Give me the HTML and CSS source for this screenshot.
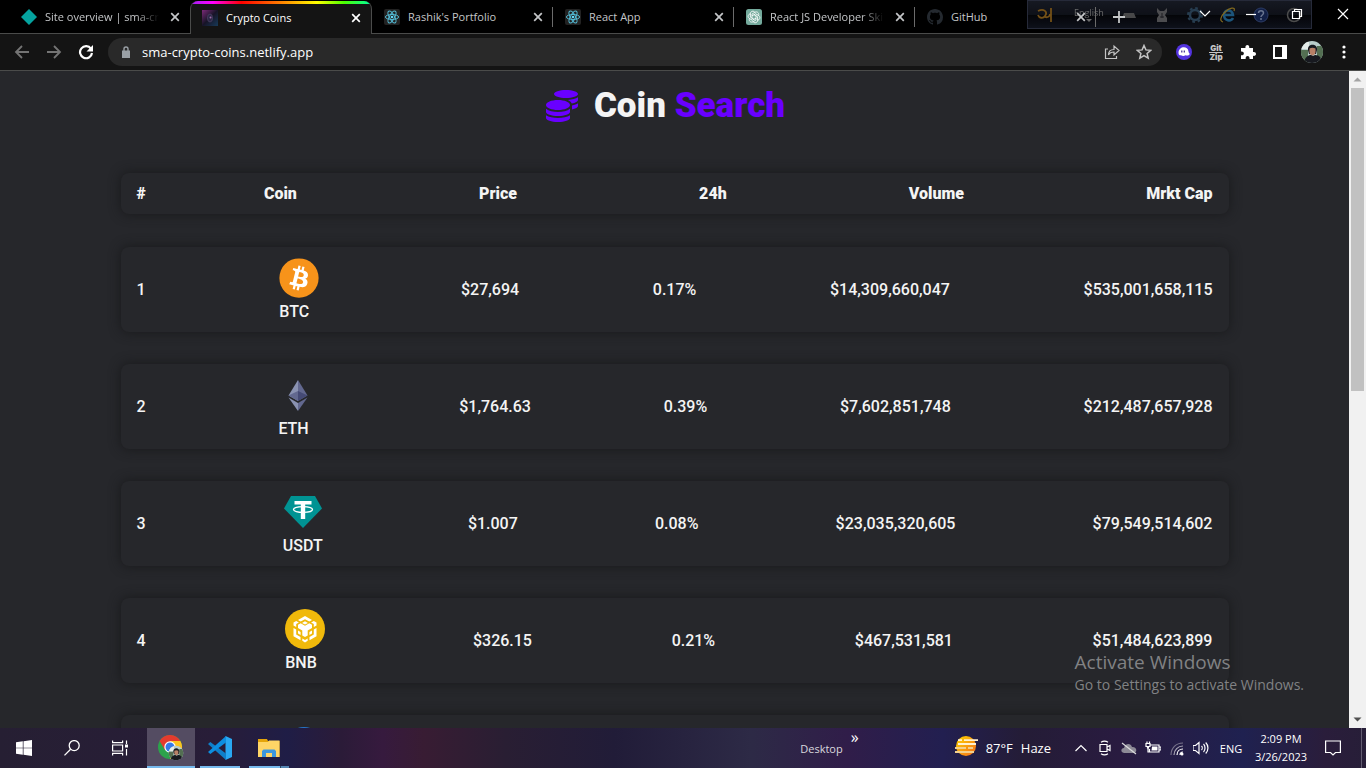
FILE: index.html
```html
<!DOCTYPE html>
<html lang="en">
<head>
<meta charset="utf-8">
<title>Crypto Coins</title>
<link rel="stylesheet" href="styles.css">
</head>
<body>
<svg class="defs" aria-hidden="true">
  <symbol id="x" viewBox="0 0 16 16"><path d="M4.2 4.2l7.6 7.6M11.8 4.2l-7.6 7.6" stroke="currentColor" stroke-width="1.7"/></symbol>
  <symbol id="react" viewBox="0 0 16 16"><rect width="16" height="16" rx="2" fill="#222"/><g fill="none" stroke="#53b9d3" stroke-width="1"><ellipse cx="8" cy="8" rx="6.6" ry="2.5"/><ellipse cx="8" cy="8" rx="6.6" ry="2.5" transform="rotate(60 8 8)"/><ellipse cx="8" cy="8" rx="6.6" ry="2.5" transform="rotate(120 8 8)"/></g><circle cx="8" cy="8" r="1.3" fill="#61dafb"/></symbol>
  <symbol id="person" viewBox="0 0 24 24"><clipPath id="pc"><circle cx="12" cy="12" r="11"/></clipPath><g clip-path="url(#pc)"><path fill="#b9cdca" d="M0 0h24v24H0z"/><path fill="#536f52" d="M0 10h8v14H0zM17 6h7v12h-7z"/><path fill="#e4ece9" d="M1 2h8v7H1z"/><path fill="#17191f" d="M8 10C7 3 18 3 17 10l-1 4H9z"/><path fill="#b78067" d="M9.500 8.500c2-1 4-1 6 0 .5 5-1 7-3 7s-3.500-2-3-7z"/><path fill="#17191f" d="M4 24c0-6 4-9 7-9l2 1 2-1c5 0 7 4 7 9z"/></g></symbol>
</svg>

<header class="tabstrip">
  <div class="tab">
    <svg class="fav" viewBox="0 0 16 16"><path fill="#05a39f" d="M8 0l8 8-8 8-8-8z"/></svg>
    <a class="tab-title fade" href="#">Site overview | sma-cry</a>
    <button class="tab-close" aria-label="Close tab"><svg><use href="#x"/></svg></button>
  </div>
  <div class="tab active">
    <svg class="fav" viewBox="0 0 16 16"><defs><linearGradient id="fv" x1="0" y1="0" x2="1" y2="1"><stop offset="0" stop-color="#7b2a78"/><stop offset=".5" stop-color="#171427"/><stop offset="1" stop-color="#173a58"/></linearGradient></defs><path fill="url(#fv)" d="M0 0h16v16H0z"/><ellipse cx="8" cy="8" rx="2.500" ry="4" fill="#2a2744" stroke="#51456c" stroke-width=".7"/><circle cx="8.500" cy="7.500" r="1" fill="#a06aa8"/></svg>
    <a class="tab-title" href="#">Crypto Coins</a>
    <button class="tab-close" aria-label="Close tab"><svg><use href="#x"/></svg></button>
  </div>
  <div class="tab ruled">
    <svg class="fav"><use href="#react"/></svg>
    <a class="tab-title" href="#">Rashik's Portfolio</a>
    <button class="tab-close" aria-label="Close tab"><svg><use href="#x"/></svg></button>
  </div>
  <div class="tab ruled">
    <svg class="fav"><use href="#react"/></svg>
    <a class="tab-title" href="#">React App</a>
    <button class="tab-close" aria-label="Close tab"><svg><use href="#x"/></svg></button>
  </div>
  <div class="tab ruled">
    <svg class="fav" viewBox="0 0 16 16"><rect width="16" height="16" rx="2.500" fill="#74aa9c"/><g fill="none" stroke="#fff" stroke-width=".8"><path id="kn" d="M6 9.200V5l3.200-1.900c2.300-1 4.300 1.400 3.300 3.500"/><use href="#kn" transform="rotate(60 8 8)"/><use href="#kn" transform="rotate(120 8 8)"/><use href="#kn" transform="rotate(180 8 8)"/><use href="#kn" transform="rotate(240 8 8)"/><use href="#kn" transform="rotate(300 8 8)"/></g></svg>
    <a class="tab-title fade" href="#">React JS Developer Ski</a>
    <button class="tab-close" aria-label="Close tab"><svg><use href="#x"/></svg></button>
  </div>
  <div class="tab ruled">
    <svg class="fav" viewBox="0 0 16 16"><path fill="#24292f" d="M8 0C3.580 0 0 3.580 0 8c0 3.540 2.290 6.530 5.470 7.590.4.070.55-.17.55-.38 0-.19-.01-.82-.01-1.490-2.010.37-2.530-.49-2.690-.94-.09-.23-.48-.94-.82-1.130-.28-.15-.68-.52-.01-.53.63-.01 1.080.58 1.230.82.72 1.210 1.870.87 2.330.66.07-.52.28-.87.51-1.070-1.780-.2-3.640-.89-3.640-3.950 0-.87.31-1.590.82-2.150-.08-.2-.36-1.020.08-2.120 0 0 .67-.21 2.200.82.640-.18 1.320-.27 2-.27s1.360.09 2 .27c1.530-1.040 2.200-.82 2.200-.82.44 1.100.16 1.920.08 2.120.51.56.82 1.270.82 2.150 0 3.070-1.870 3.750-3.650 3.950.29.25.54.73.54 1.480 0 1.070-.01 1.930-.01 2.200 0 .21.15.46.55.38A8.010 8.010 0 0016 8c0-4.420-3.580-8-8-8z"/></svg>
    <a class="tab-title" href="#">GitHub</a>
    <button class="tab-close" aria-label="Close tab"><svg><use href="#x"/></svg></button>
  </div>
  <button class="new-tab" aria-label="New tab"><svg viewBox="0 0 14 14"><path d="M7 1v12M1 7h12" stroke="#c4c6c8" stroke-width="1.800"/></svg></button>
  <div class="window-controls">
    <button aria-label="Search tabs"><svg viewBox="0 0 12 12"><path d="M1 3l5 5 5-5"/></svg></button>
    <button aria-label="Minimize"><svg viewBox="0 0 12 12"><path d="M1 6.500h10"/></svg></button>
    <button aria-label="Restore"><svg viewBox="0 0 12 12"><path d="M1.500 3.500h7v7h-7zM3.500 3V1.500h7v7H9"/></svg></button>
    <button aria-label="Close"><svg viewBox="0 0 12 12"><path d="M1 1l10 10M11 1L1 11"/></svg></button>
  </div>
  <div class="langbar">
    <svg class="lb lb-a" viewBox="0 0 16 16"><path d="M1 4c6-3 10 1 7 5-2 3-6 2-7-1M8 10c3 1 5-1 5-3M14 1v14" fill="none" stroke="#80591a" stroke-width="1.800"/></svg>
    <span class="lb-lang">English<svg viewBox="0 0 6 4"><path d="M0 0h6L3 3z" fill="#777"/></svg></span>
    <svg class="lb" viewBox="0 0 16 16"><path d="M3 6h10l2 5H1z" fill="#505052"/></svg>
    <svg class="lb" viewBox="0 0 16 16"><path d="M3 1l3 3h4l3-3v4l-2 3 2 3v4H3v-4l2-3-2-3z" fill="#555558"/><path d="M8 6v5M6 10h4" stroke="#202126"/></svg>
    <svg class="lb" viewBox="0 0 16 16"><circle cx="8" cy="8" r="5" fill="none" stroke="#2c4459" stroke-width="2.500"/><circle cx="8" cy="8" r="7" fill="none" stroke="#2c4459" stroke-width="2" stroke-dasharray="2.700 2.800"/></svg>
    <svg class="lb" viewBox="0 0 16 16"><path d="M13 11c-2 4-9 3-9-3 0-6 8-6 9 0H5" fill="none" stroke="#205f89" stroke-width="2.500"/><path d="M14 4C16-1 9 1 5 5s-6 9-2 10" fill="none" stroke="#8f7422" stroke-width="1.200"/></svg>
    <svg class="lb" viewBox="0 0 16 16"><circle cx="8" cy="8" r="7" fill="#15244f" stroke="#31426f"/><path d="M5.500 6c0-3 5-3 5 0 0 2-2.500 2-2.500 4M8 11v2" fill="none" stroke="#7582a0" stroke-width="1.500"/></svg>
    <svg class="lb" viewBox="0 0 16 16"><circle cx="8" cy="8" r="6.500" fill="none" stroke="#555" stroke-width="1.500"/></svg>
  </div>
</header>

<nav class="toolbar">
  <button class="tool dim" aria-label="Back"><svg viewBox="0 0 16 16"><path d="M15 8H2M8 2L2 8l6 6" fill="none" stroke="currentColor" stroke-width="1.800"/></svg></button>
  <button class="tool dim" aria-label="Forward"><svg viewBox="0 0 16 16"><path d="M1 8h13M8 2l6 6-6 6" fill="none" stroke="currentColor" stroke-width="1.800"/></svg></button>
  <button class="tool" aria-label="Reload"><svg viewBox="0 0 16 16"><path d="M13 4.800A6 6 0 1 0 14 9" fill="none" stroke="currentColor" stroke-width="2.200"/><path d="M15 1v6.500H8.500z" fill="currentColor"/></svg></button>
  <div class="omnibox">
    <svg class="lock" viewBox="0 0 10 12"><path d="M1 4.500h8V12H1z" fill="#9aa0a6"/><path d="M3 5V3c0-2.600 4-2.600 4 0v2" fill="none" stroke="#9aa0a6" stroke-width="1.400"/></svg>
    <input class="url" aria-label="Address" value="sma-crypto-coins.netlify.app">
    <button class="tool grey" aria-label="Share"><svg viewBox="0 0 16 16"><path d="M4 5H1.500v9.500h11V12M4.500 11c0-4 2-5.500 5.500-5.500V2l5 4.500L10 11V8c-3 0-4.500 1-5.500 3z" fill="none" stroke="currentColor" stroke-width="1.200"/></svg></button>
    <button class="tool grey" aria-label="Bookmark"><svg viewBox="0 0 16 16"><path d="M8 1.500l1.900 4.400 4.800.4-3.600 3.200 1.100 4.700L8 11.700l-4.200 2.500 1.100-4.700-3.600-3.200 4.800-.4z" fill="none" stroke="currentColor" stroke-width="1.500"/></svg></button>
  </div>
  <div class="extensions">
    <button class="tool" aria-label="Ghost extension"><svg viewBox="0 0 16 16"><circle cx="8" cy="8" r="8" fill="#5333df"/><path d="M2.500 9c0-7 9.500-7.500 10-1.500 0 1.500 1.500 1.500 1 3-1 1.500-3 1-4 .8-1.500 1-3 .9-4.500 0C3.500 11.500 2.500 10.500 2.500 9z" fill="#fff"/><path d="M5.800 6.500v2M8.300 6.500v2" stroke="#3c2a8f" stroke-width="1.200"/></svg></button>
    <button class="tool gitzip"><span>Git</span><span class="zip">Zip</span></button>
    <button class="tool" aria-label="Extensions"><svg viewBox="0 0 16 16"><path d="M1 4h4.500c-.8-4 4.500-4 3.700 0H13v4c4-.8 4 4.600 0 3.800V15H9.500c.6-4-4.400-4-3.800 0H1v-3.800c3.800.6 3.800-4 0-3.600z" fill="#fff"/></svg></button>
    <button class="tool" aria-label="Side panel"><svg viewBox="0 0 16 16"><path d="M2 2h12v12H2z" fill="none" stroke="#fff" stroke-width="2"/><path d="M10 2h4v12h-4z" fill="#fff"/></svg></button>
    <button class="tool avatar" aria-label="Profile"><svg><use href="#person"/></svg></button>
    <button class="tool" aria-label="Menu"><svg viewBox="0 0 16 16" fill="#fff"><circle cx="8" cy="3" r="1.600"/><circle cx="8" cy="8" r="1.600"/><circle cx="8" cy="13" r="1.600"/></svg></button>
  </div>
</nav>

<div class="viewport">
  <main class="page">
    <h1 class="brand">
      <svg viewBox="0 0 512 512" fill="#6900ff"><path d="M0 405.300V448c0 35.300 86 64 192 64s192-28.700 192-64v-42.700C342.700 434.400 267.200 448 192 448S41.300 434.400 0 405.300zM320 128c106 0 192-28.700 192-64S426 0 320 0 128 28.700 128 64s86 64 192 64zM0 300.400V352c0 35.300 86 64 192 64s192-28.700 192-64v-51.600c-41.300 34-116.900 51.600-192 51.600S41.300 334.400 0 300.400zm416 11c57.300-11.100 96-31.700 96-55.400v-42.700c-23.200 16.400-57.300 27.600-96 34.500v63.600zM192 160C86 160 0 195.800 0 240s86 80 192 80 192-35.800 192-80-86-80-192-80zm219.300 56.300c60-10.800 100.700-32 100.700-56.300v-42.700c-35.500 25.100-96.500 38.600-160.700 41.800 29.500 14.300 51.200 33.500 60 57.200z"/></svg>
      <span>Coin <span class="accent">Search</span></span>
    </h1>
    <table class="coins">
      <thead>
        <tr class="card head"><th>#</th><th class="coin-head">Coin</th><th>Price</th><th>24h</th><th>Volume</th><th>Mrkt Cap</th></tr>
      </thead>
      <tbody>
        <tr class="card"><td>1</td><td class="coin"><svg viewBox="0 0 32 32"><circle cx="16" cy="16" r="15.700" fill="#f7931a"/><path fill="#fff" d="M23.189 14.020c.314-2.096-1.283-3.223-3.465-3.975l.708-2.840-1.728-.430-.690 2.765c-.454-.114-.920-.220-1.385-.326l.695-2.783L15.596 6l-.708 2.839c-.376-.086-.746-.170-1.104-.260l.002-.009-2.384-.595-.460 1.846s1.283.294 1.256.312c.700.175.826.638.805 1.006l-.806 3.235c.048.012.110.030.180.057l-.183-.045-1.130 4.532c-.086.212-.303.531-.793.410.018.025-1.256-.313-1.256-.313l-.858 1.978 2.250.561c.418.105.828.215 1.231.318l-.715 2.872 1.727.430.708-2.840c.472.127.930.245 1.378.357l-.706 2.828 1.728.430.715-2.866c2.948.558 5.164.333 6.097-2.333.752-2.146-.037-3.385-1.588-4.192 1.130-.260 1.980-1.003 2.207-2.538zm-3.950 5.538c-.533 2.147-4.148.986-5.320.695l.950-3.805c1.172.293 4.929.872 4.370 3.110zm.535-5.569c-.487 1.953-3.495.960-4.470.717l.860-3.450c.975.243 4.118.696 3.610 2.733z"/></svg><span>BTC</span></td><td>$27,694</td><td>0.17%</td><td>$14,309,660,047</td><td>$535,001,658,115</td></tr>
        <tr class="card"><td>2</td><td class="coin"><svg viewBox="0 0 40 40"><path fill="#8a92b2" d="M20 5v21l-9.500-5.500z"/><path fill="#62688f" d="M20 5l9.500 15.500L20 26z"/><path fill="#62688f" d="M20 16l-9.500 4.500L20 26z"/><path fill="#454a75" d="M20 16l9.500 4.500L20 26z"/><path fill="#8a92b2" d="M10.500 22.500L20 28v8z"/><path fill="#62688f" d="M29.500 22.500L20 28v8z"/></svg><span>ETH</span></td><td>$1,764.63</td><td>0.39%</td><td>$7,602,851,748</td><td>$212,487,657,928</td></tr>
        <tr class="card"><td>3</td><td class="coin"><svg viewBox="0 0 40 40"><path fill="#009393" d="M8 4h24l7 12.500L20 36 1 16.500z"/><path fill="#fff" d="M11.500 9h17v3.500h-6.300v14.400h-4.400V12.500h-6.300z"/><ellipse cx="20" cy="17.500" rx="9.500" ry="2.900" fill="none" stroke="#fff" stroke-width="1.300"/></svg><span>USDT</span></td><td>$1.007</td><td>0.08%</td><td>$23,035,320,605</td><td>$79,549,514,602</td></tr>
        <tr class="card"><td>4</td><td class="coin"><svg viewBox="0 0 40 40"><circle cx="20" cy="20" r="20" fill="#f0b90b"/><g fill="#fff"><path d="M20 7l7 4-2.700 1.600L20 10.200l-4.300 2.400L13 11z"/><path d="M20 12.200l3 1.700-3 1.700-3-1.700z"/><path d="M8.500 13.500l2.700-1.500 2.700 1.500-2.700 1.600v3l-2.700-1.600zM31.500 13.500L28.800 12l-2.700 1.500 2.700 1.600v3l2.700-1.600z"/><path d="M13 15.700l2.700-1.500 4.300 2.500 4.300-2.500 2.700 1.500v3.200l-4.300 2.500v5L20 28l-2.700-1.600v-5L13 18.900z"/><path d="M8.500 19l2.700 1.600v5l4.300 2.500v3.200l-7-4.100zM31.500 19l-2.700 1.600v5l-4.300 2.500v3.200l7-4.100zM13 21.500l2.600 1.500v3L13 24.500zM27 21.500L24.400 23v3l2.600-1.500zM17.300 29.500l2.700 1.600 2.700-1.600v2.300L20 33.500l-2.700-1.700z"/></g></svg><span>BNB</span></td><td>$326.15</td><td>0.21%</td><td>$467,531,581</td><td>$51,484,623,899</td></tr>
        <tr class="card next"><td class="coin"><svg viewBox="0 0 40 40"><circle cx="20" cy="20" r="20" fill="#2775ca"/></svg></td></tr>
      </tbody>
    </table>
  </main>
  <div class="scrollbar">
    <svg viewBox="0 0 17 17"><path d="M4.500 10.500h8l-4-4z" fill="#a3a3a3"/></svg>
    <div class="thumb"></div>
    <svg class="down" viewBox="0 0 17 17"><path d="M4.500 6.500h8l-4 4z" fill="#505050"/></svg>
  </div>
  <div class="activate"><p class="activate-title">Activate Windows</p><p>Go to Settings to activate Windows.</p></div>
</div>

<footer class="taskbar">
  <button class="task" aria-label="Start"><svg class="i16" viewBox="0 0 16 16" fill="#fff"><path d="M0 2.300l6.800-1v6.400H0zM7.500 1.200L16 0v7.700H7.500zM0 8.300h6.800v6.400l-6.800-1zM7.500 8.300H16V16l-8.500-1.200z"/></svg></button>
  <button class="task" aria-label="Search"><svg class="i16" viewBox="0 0 16 16" fill="none" stroke="#fff" stroke-width="1.300"><circle cx="10.200" cy="5.600" r="5"/><path d="M6.600 9.200L.5 15.400"/></svg></button>
  <button class="task" aria-label="Task view"><svg class="i16" viewBox="0 0 16 16" fill="none" stroke="#fff" stroke-width="1.200"><path d="M.6.500v2.200h10V.5M.6 15.500v-2.200h10v2.200M.6 5h10v6H.6zM14.500.5v3.500M14.500 9v6.500"/><path d="M13 4.500h3v3h-3z" fill="#fff" stroke="none"/></svg></button>
  <button class="task open current" aria-label="Chrome"><svg class="i26" viewBox="0 0 26 26"><circle cx="12" cy="12" r="12" fill="#2ca24c"/><path d="M1.600 6A12 12 0 0 1 22.400 6L12 12 7 15z" fill="#e33b2e"/><path d="M22.400 6H12l5.200 9L12 24A12 12 0 0 0 22.400 6z" fill="#fcc31e"/><circle cx="12" cy="12" r="5.700" fill="#fff"/><circle cx="12" cy="12" r="4.500" fill="#3579e8"/><use href="#person" x="10" y="10" width="16" height="16"/></svg></button>
  <button class="task open" aria-label="Visual Studio Code"><svg class="i24" viewBox="0 0 24 24"><path d="M17.500 0L24 3v18l-6.500 3z" fill="#29a8f2"/><path d="M0 8l2.300-2L18 17.500V24z" fill="#0f7fc9"/><path d="M0 16l2.300 2L18 6.500V0z" fill="#0d8ee0"/></svg></button>
  <button class="task open stacked" aria-label="File Explorer"><svg class="i24" viewBox="0 0 24 24"><path d="M1 3h9l1 2h11.500v16H1z" fill="#e5a50a"/><path d="M1 6h10l1-1.500h10.500V21H1z" fill="#ffd566"/><path d="M5 21v-6l1.500-1.500h11L19 15v6h-4v-4H9v4z" fill="#3c97dd"/></svg></button>
  <div class="tray">
    <button class="desktop">Desktop<span>»</span></button>
    <button class="weather"><svg class="i24" viewBox="0 0 24 24"><defs><linearGradient id="sun" x1="0" y1="0" x2="1" y2="1"><stop offset="0" stop-color="#ffd600"/><stop offset="1" stop-color="#f26a1b"/></linearGradient></defs><circle cx="12" cy="10" r="10" fill="url(#sun)"/><path d="M4 4.200h4m2 0h14M4 8h18" stroke="#fff1cf" stroke-width="1.800"/><path d="M1 12h11m2 0h5M1 16h19" stroke="#f2cf8c" stroke-width="1.800"/></svg><span>87°F</span><span>Haze</span></button>
    <button class="tr" aria-label="Hidden icons"><svg viewBox="0 0 16 16"><path d="M2.500 11L8 5.500l5.500 5.500"/></svg></button>
    <button class="tr" aria-label="Meet now"><svg viewBox="0 0 16 16"><path d="M3 4.500h7v7H3zM10 7l3-1.500v5L10 9M4 2.300c2-1.300 5-1.300 7 0M4 13.700c2 1.300 5 1.300 7 0"/></svg></button>
    <button class="tr" aria-label="OneDrive"><svg viewBox="0 0 16 16"><path d="M3 13c-4-.5-3-5 0-5 1-5 7-5 8-1 5-.5 6 6 1 6z" fill="#8d8a96" stroke="none"/><path d="M1 3l14 11" stroke="#ddd"/></svg></button>
    <button class="tr" aria-label="Battery"><svg viewBox="0 0 16 16"><path d="M5.500 5H14v7H4.500V9M14.500 7H16v3h-1.500M1 3.500h4v3H3.500V8h-1V6.500H1zM2 3.500V1.500M4.500 3.500V1.500M3 8v4h1.500"/><path d="M7 6.500h5.500v4H6.500z" fill="#fff" stroke="none"/></svg></button>
    <button class="tr" aria-label="Network"><svg viewBox="0 0 16 16"><path d="M2 15C2 8 7 3 14 3" stroke="#77738a"/><path d="M5 15c0-5 4-9 9-9" stroke="#aaa7b6"/><path d="M8 15c0-3.500 2.500-6 6-6M11 15c0-2 1-3 3-3"/><circle cx="13" cy="14" r="1.500" fill="#fff" stroke="none"/></svg></button>
    <button class="tr" aria-label="Volume"><svg viewBox="0 0 16 16"><path d="M0 5.500h2.500L6 2.500v11l-3.500-3H0zM8.500 6c1 1 1 3 0 4M10.500 4c2 2 2 6 0 8M12.700 2.500c3 3 3 8 0 11"/></svg></button>
    <button class="lang">ENG</button>
    <button class="clock"><span>2:09 PM</span><span>3/26/2023</span></button>
    <button class="notify" aria-label="Notifications"><svg class="i16" viewBox="0 0 16 16" fill="none" stroke="#fff" stroke-width="1.200"><path d="M.6 1h14.800v11.500h-4.900L8 15l-2.500-2.500H.6z"/></svg></button>
  </div>
</footer>
</body>
</html>
```
FILE: styles.css
```css
* { box-sizing: border-box; }

body {
  margin: 0;
  height: 100vh;
  display: flex;
  flex-direction: column;
  overflow: hidden;
  background: #000;
  color: #fff;
  font-family: "Open Sans", "Noto Sans", sans-serif;
  font-size: 11px;
}

button {
  margin: 0;
  padding: 0;
  border: 0;
  background: none;
  color: inherit;
  font: inherit;
  display: flex;
  align-items: center;
  justify-content: center;
}

a { color: inherit; text-decoration: none; }
svg { display: block; flex: none; }
.defs { position: absolute; width: 0; height: 0; }

/* Tab strip */
.tabstrip {
  position: relative;
  display: flex;
  flex: none;
  height: 34px;
  padding-left: 9px;
  border-bottom: 1px solid #4a4b4a;
}
.tab {
  position: relative;
  width: 181px;
  display: flex;
  align-items: center;
  gap: 8px;
  padding: 0 7px 0 12px;
  color: #c4c6c8;
}
.tab.active {
  width: 182px;
  margin: 1px 0 -1px;
  padding-left: 11px;
  background: #141414;
  color: #fff;
  border: solid #4a4b4a;
  border-width: 0 1px;
  border-radius: 8px 8px 0 0;
  overflow: hidden;
}
.tab.active::before {
  content: "";
  position: absolute;
  inset: 0 0 auto;
  height: 3px;
  background: linear-gradient(90deg, #a020f0, #f0f 12%, #f00 28%, #ff8000 50%, #ff0 70%, #4cff00 85%, #00ff9c);
}
.tab.ruled::after {
  content: "";
  position: absolute;
  right: 0;
  top: 7px;
  width: 1px;
  height: 20px;
  background: #6b6b6b;
}
.fav { width: 16px; height: 16px; }
.tab-title { flex: 1; min-width: 0; white-space: nowrap; }
.tab-title.fade { -webkit-mask-image: linear-gradient(90deg, #000 80%, transparent); mask-image: linear-gradient(90deg, #000 80%, transparent); }
.tab-close svg { width: 16px; height: 16px; }
.new-tab { width: 24px; margin-left: 11px; position: relative; z-index: 2; }
.new-tab svg { width: 14px; height: 14px; }
.window-controls { display: flex; margin-left: auto; position: relative; z-index: 2; height: 28px; }
.window-controls button { width: 46px; }
.window-controls svg { width: 12px; height: 12px; fill: none; stroke: #fff; stroke-width: 1.2; }

.langbar {
  position: absolute;
  top: 0;
  right: 54px;
  width: 285px;
  height: 29px;
  padding: 0 9px;
  display: flex;
  align-items: center;
  justify-content: space-between;
  border: 1px solid #2b2f40;
  background: linear-gradient(#191c26, #10131b 50%, #05060a 52%, #10131e);
  opacity: 0.9;
  z-index: 1;
}
.tab:nth-child(6) { z-index: 2; }
.lb { width: 16px; height: 16px; }
.lb-lang { display: flex; flex-direction: column; align-items: center; padding-left: 4px; color: #777; font-size: 9px; line-height: 12px; }
.lb-lang svg { width: 6px; height: 4px; }

/* Toolbar */
.toolbar {
  flex: none;
  display: flex;
  align-items: center;
  height: 37px;
  padding: 0 6px;
  background: #141414;
  border-bottom: 1px solid #4a4b4a;
}
.tool { width: 32px; height: 28px; }
.tool svg { width: 16px; height: 16px; }
.tool.dim { color: #747474; }
.tool.grey { color: #c4c4c4; }
.omnibox {
  flex: 1;
  display: flex;
  align-items: center;
  height: 28px;
  margin: 0 6px;
  padding: 0 2px 0 13px;
  border-radius: 14px;
  background: #292929;
}
.lock { width: 10px; height: 12px; }
.url {
  flex: 1;
  min-width: 0;
  margin-left: 11px;
  padding: 0;
  border: 0;
  outline: 0;
  background: none;
  color: #fff;
  font: 13px "Open Sans", "Noto Sans", sans-serif;
}
.extensions { display: flex; }
.tool.gitzip { flex-direction: column; align-items: center; color: #c4c4c4; font: 900 8px/8px "Inter", sans-serif; }
.gitzip .zip { border-top: 1px solid #c4c4c4; }
.tool.avatar svg { width: 24px; height: 24px; }

/* Page */
.viewport { position: relative; flex: 1; min-height: 0; display: flex; }
.page {
  flex: 1;
  min-width: 0;
  overflow: hidden;
  padding-top: 15px;
  background: #26272b;
  color: #f4f4f4;
  font-family: Roboto, "Noto Sans", sans-serif;
  font-size: 16px;
}
.brand {
  display: flex;
  align-items: center;
  justify-content: center;
  gap: 16px;
  margin: 0;
  padding-right: 18px;
  font-size: 35px;
  line-height: 40px;
  font-weight: 900;
}
.brand > svg { width: 32px; height: 32px; }
.accent { color: #6900ff; }
.coins {
  display: block;
  max-width: 1140px;
  margin: 47px auto 0;
  padding: 0 16px;
}
.coins thead, .coins tbody { display: block; }
.card {
  display: flex;
  align-items: center;
  justify-content: space-between;
  height: 85px;
  margin-bottom: 32px;
  padding: 0 16px;
  border-radius: 8px;
  background: #26272b;
  box-shadow: 0 0 12px #18191b;
  font-weight: 500;
}
.card.head { height: 41px; margin-bottom: 33px; }
.card th, .card td { padding: 0; }
.card th { font-weight: 900; }
.card .coin-head { margin-left: -64px; }
.card .coin { padding-top: 2px; }
.coin svg { width: 40px; height: 40px; margin: 0 8px 2px 0; }
.coin span { display: block; line-height: 24px; }
.card.next { justify-content: flex-start; align-items: flex-start; }
.card.next .coin { padding: 12px 0 0 147px; }

.scrollbar { flex: none; width: 17px; display: flex; flex-direction: column; align-items: center; background: #f1f1f1; }
.scrollbar svg { width: 17px; height: 17px; }
.scrollbar .down { margin-top: auto; }
.thumb { width: 13px; height: 303px; background: #c1c1c1; }

.activate {
  position: absolute;
  right: 62px;
  bottom: 33px;
  color: #818284;
  font-size: 14px;
  line-height: 20px;
}
.activate p { margin: 0; }
.activate .activate-title { font-size: 19px; line-height: 26px; }

/* Taskbar */
.taskbar {
  flex: none;
  display: flex;
  height: 40px;
  background: linear-gradient(90deg, #261f33 0, #281d38 16%, #1f1d46 21%, #2b1b38 25%, #361a3e 28%, #381c33 31%, #291e33 37%, #211c38 45%, #2d2a46 55%, #301d49 62%, #221f50 69%, #241c36 75%, #291b40 82%, #1f2150 91%, #2a1d3b 97%, #271e38);
}
.task { width: 49px; position: relative; padding-right: 2px; }
.task:nth-child(-n+3) { width: 48px; padding-right: 0; }
.i16 { width: 16px; height: 16px; }
.i24 { width: 24px; height: 24px; }
.i26 { width: 26px; height: 26px; }
.task.open::after {
  content: "";
  position: absolute;
  left: 4px;
  right: 5px;
  bottom: 0;
  height: 2px;
  background: #76b9ed;
}
.task.open.current { width: 48px; margin: 0 1px 0 3px; padding: 0; background: #544c62; }
.task.current::after { left: 0; right: 0; }
.task.stacked::after { background: linear-gradient(90deg, #76b9ed 77%, #2b4664 77%, #2b4664 80%, #5486b3 80%); }
.tray { display: flex; margin-left: auto; padding-right: 4px; }
.tray::after { content: ""; width: 1px; margin-left: 8px; background: #625c70; }
.desktop { gap: 8px; margin-right: 95px; color: #d9d8de; }
.desktop span { font-size: 16px; line-height: 16px; margin-bottom: 22px; color: #fff; }
.weather { gap: 8px; margin-right: 18px; font-size: 13px; }
.tr { width: 24px; }
.tr svg { width: 16px; height: 16px; fill: none; stroke: #fff; stroke-width: 1.2; }
.lang { width: 36px; }
.clock { width: 64px; flex-direction: column; line-height: 18px; }
.notify { width: 40px; }
```
